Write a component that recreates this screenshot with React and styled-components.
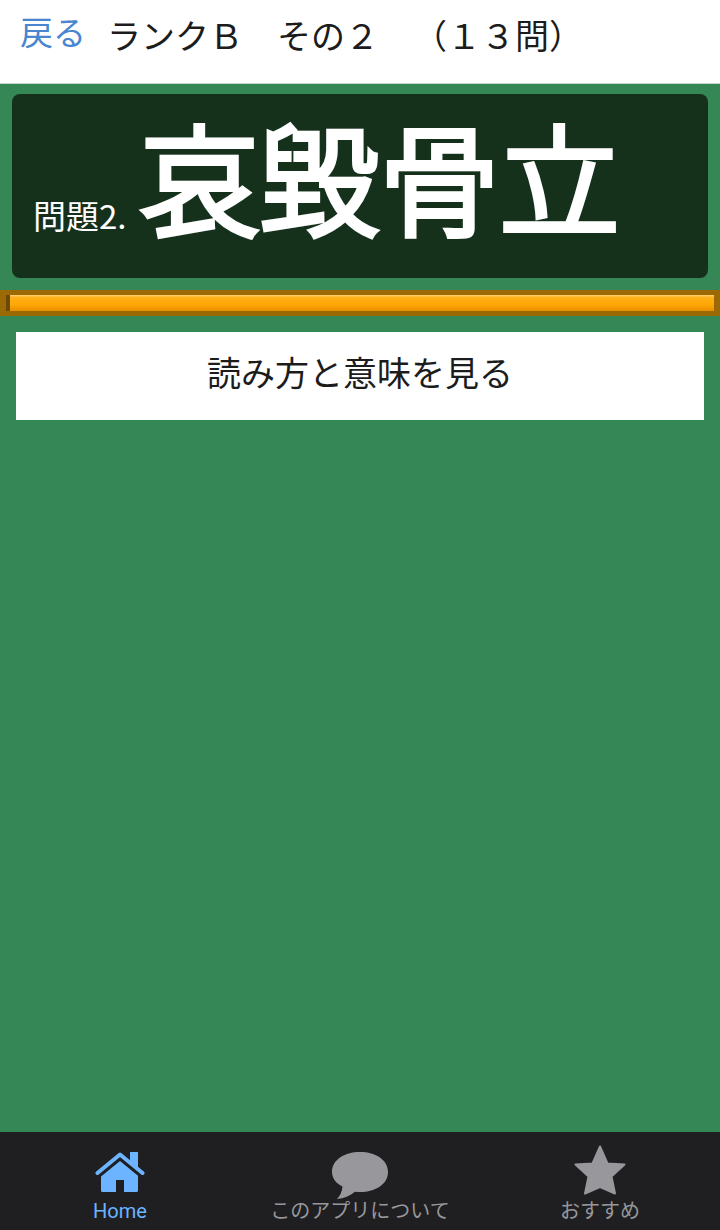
import styled, { createGlobalStyle } from "styled-components";

const GlobalStyle = createGlobalStyle`
  html, body {
    margin: 0;
    padding: 0;
  }
  body {
    font-family: "Noto Sans CJK JP", "Noto Sans", sans-serif;
    text-spacing-trim: space-all;
  }
`;

const tabs = [
  { label: "Home", icon: HomeIcon, active: true },
  { label: "このアプリについて", icon: ChatIcon },
  { label: "おすすめ", icon: StarIcon },
];

export default function App() {
  return (
    <Page>
      <GlobalStyle />
      <Header>
        <BackLink>戻る</BackLink>
        <HeaderTitle>ランクＢ　その２　（１３問）</HeaderTitle>
      </Header>
      <Main>
        <Board>
          <QuestionNo>問題2.</QuestionNo>
          <Question>哀毀骨立</Question>
        </Board>
        <Bar>
          <BarFill />
        </Bar>
        <AnswerButton>
          <span>読み方と意味を見る</span>
        </AnswerButton>
      </Main>
      <TabBar>
        {tabs.map((tab) => (
          <Tab key={tab.label} $active={tab.active}>
            <tab.icon />
            <TabLabel>{tab.label}</TabLabel>
          </Tab>
        ))}
      </TabBar>
    </Page>
  );
}

function HomeIcon() {
  return (
    <TabIcon viewBox="0 0 50 40" $width={50} $height={40} $gap={5}>
      <path d="M6 24.6 L25 9 L43 23.8 V38.5 Q43 40 41.5 40 H29 V28 H21 V40 H7.5 Q6 40 6 38.5 Z" fill="currentColor" />
      <path d="M35 0 H43 V17.3 L35 10.7 Z" fill="currentColor" />
      <path
        d="M2.5 21 L25 2.5 L47.5 21"
        fill="none"
        stroke="currentColor"
        strokeWidth="4"
        strokeLinecap="round"
        strokeLinejoin="round"
      />
    </TabIcon>
  );
}

function ChatIcon() {
  return (
    <TabIcon viewBox="0 0 56 47" $width={56} $height={47} $gap={-2}>
      <path
        d="M28 0 C44 0 56 8 56 20 C56 32 44 40 28 40 C26 40 24.5 40 23 39.8 C18 44 12 46.5 5 47 C8 44 10 40 10.5 34.5 C4 31.5 0 26 0 20 C0 8 12 0 28 0 Z"
        fill="currentColor"
      />
    </TabIcon>
  );
}

function StarIcon() {
  return (
    <TabIcon viewBox="0 0 52 50" $width={52} $height={50} $gap={2}>
      <path
        d="M26 1.5 L33.5 18.5 L50.5 19.5 L37.5 31.5 L41 48.5 L26 42 L11 48.5 L14.5 31.5 L1.5 19.5 L18.5 18.5 Z"
        fill="currentColor"
        stroke="currentColor"
        strokeWidth="2"
        strokeLinejoin="round"
      />
    </TabIcon>
  );
}

const Page = styled.div`
  display: flex;
  flex-direction: column;
  width: 720px;
  height: 1230px;
  overflow: hidden;
  background-color: #358855;
`;

const Header = styled.header`
  display: flex;
  align-items: flex-start;
  box-sizing: border-box;
  height: 84px;
  padding: 9px 0 0 20px;
  background-color: #fff;
  border-bottom: 1px solid #c9d6cd;
`;

const BackLink = styled.span`
  font-size: 33px;
  line-height: 44px;
  color: #4a86cf;
`;

const HeaderTitle = styled.h1`
  margin: 4px 0 0 21px;
  font-size: 34px;
  font-weight: 400;
  line-height: 44px;
  color: #1c1c1c;
  white-space: pre;
`;

const Main = styled.main`
  flex: 1;
  display: flex;
  flex-direction: column;
  padding-top: 10px;
`;

const Board = styled.section`
  display: flex;
  align-items: flex-end;
  box-sizing: border-box;
  height: 184px;
  margin: 0 12px;
  padding: 0 0 40px 21px;
  border-radius: 8px;
  background-color: #15311c;
  color: #fff;
`;

const QuestionNo = styled.span`
  font-size: 33px;
  line-height: 46px;
  white-space: nowrap;
`;

const Question = styled.h2`
  margin: 0 0 -17px 13px;
  font-size: 120px;
  font-weight: 300;
  line-height: 160px;
  white-space: nowrap;
  -webkit-text-stroke: 6px #fff;
  stroke-linejoin: round;
`;

const Bar = styled.div`
  display: flex;
  box-sizing: border-box;
  height: 26px;
  margin-top: 12px;
  padding: 5px 6px;
  background-color: #9c6a05;
`;

const BarFill = styled.div`
  flex: 1;
  border-left: 4px solid #6b4a08;
  background: linear-gradient(#ffd27a 0, #ffb01a 15%, #ffa705 60%, #e88f00 100%);
`;

const AnswerButton = styled.button`
  display: block;
  box-sizing: border-box;
  height: 88px;
  margin: 16px 16px 0;
  padding: 0 0 8px;
  border: none;
  background-color: #fff;
  font-family: inherit;
  font-size: 34px;
  line-height: 44px;
  color: #1c1c1c;
`;

const TabBar = styled.nav`
  display: grid;
  grid-template-columns: repeat(3, 1fr);
  height: 98px;
  background-color: #1f1f21;
`;

const Tab = styled.div`
  display: flex;
  flex-direction: column;
  align-items: center;
  justify-content: flex-end;
  padding-bottom: 5px;
  color: ${({ $active }) => ($active ? "#6cb4ff" : "#98979b")};
`;

const TabIcon = styled.svg`
  display: block;
  width: ${({ $width }) => $width}px;
  height: ${({ $height }) => $height}px;
  margin-bottom: ${({ $gap }) => $gap}px;
`;

const TabLabel = styled.span`
  font-family: Roboto, "Noto Sans CJK JP", sans-serif;
  font-size: 20px;
  line-height: 28px;
  white-space: nowrap;
`;
